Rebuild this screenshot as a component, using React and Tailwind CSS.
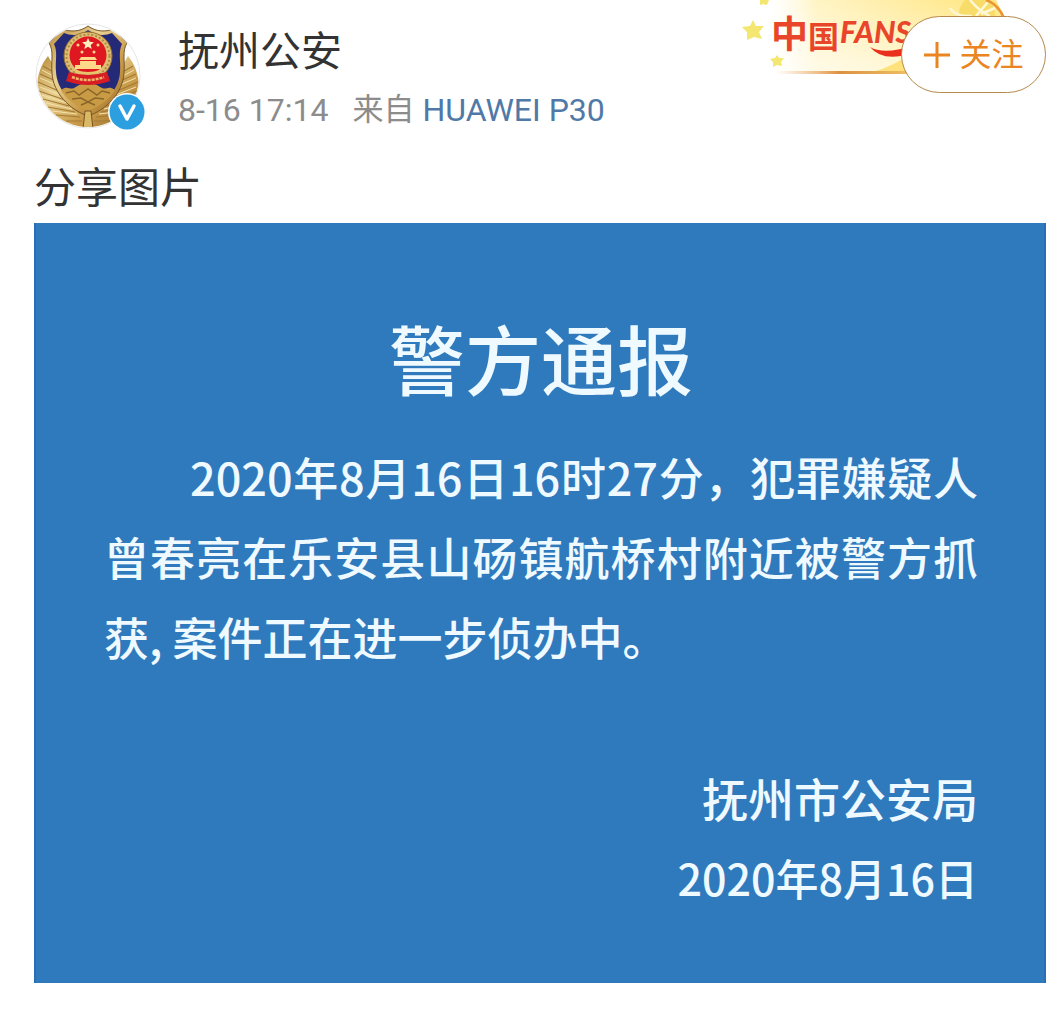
const SANS = "font-['Roboto','Noto_Sans_CJK_SC',sans-serif]";
const CJK = "font-['Noto_Sans_CJK_SC',sans-serif]";

function PoliceBadge() {
  return (
    <svg viewBox="0 0 108 108" className="size-[108px]" role="img" aria-label="抚州公安">
      <defs>
        <linearGradient id="gold" x1="0" y1="0" x2="1" y2="1">
          <stop offset="0" stopColor="#b98c3c" />
          <stop offset=".35" stopColor="#ead292" />
          <stop offset=".65" stopColor="#c99b48" />
          <stop offset="1" stopColor="#9a6a2a" />
        </linearGradient>
        <clipPath id="round">
          <circle cx="54" cy="54" r="51" />
        </clipPath>
      </defs>
      <circle cx="54" cy="54" r="52" fill="#fff" stroke="#e6e6e6" />
      <g clipPath="url(#round)">
        <path d="M14 34C4 46 0 64 6 80c5 12 20 22 42 26h12c22-4 37-14 42-26 6-16 2-34-8-46l-8 14-32 36-32-36z" fill="url(#gold)" />
        <g stroke="#a07b38" strokeWidth="1.2" fill="none">
          <path d="M9 44l14 8M6 52l18 8M4 60l23 10M5 69l26 9M9 77l26 7M14 85l27 5M22 93l24 2M32 99l16 0" />
          <path d="M99 44l-14 8M102 52l-18 8M104 60l-23 10M103 69l-26 9M99 77l-26 7M94 85l-27 5M86 93l-24 2M76 99l-16 0" />
        </g>
        <g stroke="#f3e2ae" strokeWidth="1" fill="none">
          <path d="M8 48l15 8M6 56l19 8M6 65l23 9M8 73l25 8M12 81l26 6M18 89l25 3" />
          <path d="M100 48l-15 8M102 56l-19 8M102 65l-23 9M100 73l-25 8M96 81l-26 6M90 89l-25 3" />
        </g>
        <path d="M54 4C46 10 36 10 29 7L15 21c5 8 2 17 3 30 1 20 18 37 36 43 18-6 35-23 36-43 1-13-2-22 3-30L79 7c-7 3-17 3-25-3z" fill="url(#gold)" stroke="#75562a" strokeWidth="1" />
        <path d="M54 8c-8 6-17 6-24 3L20 22c4 8 1 17 2 28 1 17 14 31 32 38 18-7 31-21 32-38 1-11-2-20 2-28L78 11c-7 3-16 3-24-3z" fill="#252a78" />
        <path d="M27 68c6-5 9 0 13-2 5-3 8-5 14-5s9 2 14 5c4 2 7-3 13 2-5 9-15 16-27 21-12-5-22-12-27-21z" fill="#c99b45" />
        <path d="M32 71l8-2 5 4 9-6 9 6 5-4 8 2M38 77l9-1 7 4 7-4 9 1M47 83l7-3 7 3" stroke="#8a662a" fill="none" strokeWidth="1.5" />
        <circle cx="54" cy="34" r="24" fill="#dfbf73" stroke="#98702e" strokeWidth="1" />
        <circle cx="54" cy="34" r="21.500" fill="none" stroke="#b08a48" strokeWidth="2" strokeDasharray="2 2" />
        <circle cx="54" cy="33" r="18.500" fill="#df1720" />
        <path d="M54 16l1.700 3.800 4.200.4-3.200 2.700 1 4.100-3.700-2.200-3.700 2.200 1-4.100-3.200-2.700 4.200-.4z" fill="#fff0c2" />
        <g fill="#ffd88a">
          <circle cx="44" cy="23" r="1.500" />
          <circle cx="48" cy="30" r="1.500" />
          <circle cx="60" cy="30" r="1.500" />
          <circle cx="64" cy="23" r="1.500" />
          <path d="M47 35h14l2 3H45zM46 39h16v4H46zM41 43h26v4H41z" />
        </g>
        <path d="M35 50q19 6 38 0l3 9q-22 8-44 0z" fill="#d71c23" />
        <path d="M38 55q16 6 32 0" fill="none" stroke="#f0b56c" strokeWidth="2.500" strokeDasharray="3 1" />
        <path d="M42 49q12 4 24 0" fill="none" stroke="#e9c46b" strokeWidth="2" />
        <path d="M51 89h6l2 18H49z" fill="#d9b866" stroke="#795420" />
      </g>
    </svg>
  );
}

function VerifiedMark() {
  return (
    <svg viewBox="0 0 38 38" className="absolute right-0 bottom-0 size-[38px]" role="img" aria-label="认证">
      <circle cx="19" cy="19" r="19" fill="#fff" />
      <circle cx="19" cy="19" r="17.500" fill="#2b9fe0" />
      <path d="M12 13l7 13 7-13" fill="none" stroke="#fff" strokeWidth="3.500" strokeLinejoin="round" strokeLinecap="round" />
    </svg>
  );
}

function FansBanner() {
  return (
    <svg viewBox="0 0 290 80" className="absolute top-0 right-[50px] h-20 w-[290px]" role="img" aria-label="中国FANS">
      <defs>
        <linearGradient id="glow" x1="0" x2="1">
          <stop offset="0" stopColor="#fffae0" stopOpacity="0" />
          <stop offset=".2" stopColor="#fff4c4" />
          <stop offset="1" stopColor="#ffe57c" />
        </linearGradient>
        <linearGradient id="fade" x1="0" x2="0" y1="0" y2="1">
          <stop offset="0" stopColor="#fff" stopOpacity="0" />
          <stop offset="1" stopColor="#fff" stopOpacity=".6" />
        </linearGradient>
        <linearGradient id="rule" x1="0" x2="1">
          <stop offset="0" stopColor="#f4b77c" stopOpacity="0" />
          <stop offset=".4" stopColor="#dc9140" />
          <stop offset="1" stopColor="#f5cf73" />
        </linearGradient>
      </defs>
      <path d="M50 0H276l8 16v57H56z" fill="url(#glow)" />
      <path d="M50 0H276l8 16v57H56z" fill="url(#fade)" />
      <path d="M152 72q18-4 40-19v19z" fill="#ffe27c" />
      <circle cx="257" cy="14" r="18" fill="#f8dc6a" />
      <path d="M230 8q5 9 22 8M250 0q10 12 20 16M268 2l-12 14M275 8l-14 6" fill="none" stroke="#fff8d8" strokeWidth="2.500" />
      <path d="M266 0q12 4 18 18" fill="none" stroke="#e99635" strokeWidth="2.500" />
      <rect x="55" y="71" width="160" height="3" fill="url(#rule)" />
      <g fill="#f3e671">
        <path d="M33 20l3 6 8 0-5 6 3 7-8-2-7 3 0-8-5-5 8-1z" />
        <path d="M57 55l2 3 5 0-3 4 1 4-5-1-4 2 0-5-3-3 5-1z" />
        <path d="M40 0h9l-2 5-4-1-3 1z" />
      </g>
      <g fill="#e9452b" className="font-['Noto_Sans_CJK_SC',sans-serif] font-bold">
        <text x="51" y="48" fontSize="37">中</text>
        <text x="88" y="48" fontSize="31">国</text>
      </g>
      <text x="120" y="43" fontSize="30" fill="#e9452b" className="font-['Lato',sans-serif] font-black italic">
        FANS
      </text>
      <path d="M150 47q14 8 42-1l-2 8q-28 8-40-7z" fill="#e9301d" />
    </svg>
  );
}

export default function App() {
  return (
    <main className={`relative bg-white pt-[22px] pr-[14px] pb-7 pl-[34px] text-[#333] ${SANS}`}>
      <FansBanner />
      <header className="relative flex items-start justify-between">
        <div className="flex">
          <div className="relative h-[109px] w-[112px] shrink-0">
            <PoliceBadge />
            <VerifiedMark />
          </div>
          <div className="ml-8">
            <h1 className="text-[41px] leading-[60px]">抚州公安</h1>
            <p className="flex items-center text-[32px] leading-[56px] whitespace-nowrap text-[#8c8c8c]">
              <time>8-16 17:14</time>
              <span className="ml-6 text-[31px]">来自</span>
              <a href="#device" className="ml-2 text-[#5079a8]">HUAWEI P30</a>
            </p>
          </div>
        </div>
        <button
          type="button"
          className="-mt-1.5 flex h-[77px] w-[145px] shrink-0 items-center justify-center gap-2 rounded-full border border-[#b58a4c] bg-white text-[32px] text-[#ea8521]"
        >
          <svg viewBox="0 0 28 28" className="size-7" aria-hidden="true">
            <path d="M14 1v26M1 14h26" stroke="currentColor" strokeWidth="3" />
          </svg>
          <span>关注</span>
        </button>
      </header>
      <p className="mt-[17px] text-[42px] leading-[68px]">分享图片</p>
      <article className={`border-x-2 border-[#2c6db8] bg-[#2f79bd] pt-[92px] pr-[66px] pb-[66px] pl-[68px] text-[45px] leading-[80px] font-medium text-[#eefaff] ${CJK}`}>
        <h2 className="text-center text-[76px] leading-[84px]">警方通报</h2>
        <p className="mt-[38px] indent-[86px] text-justify">
          2020年8月16日16时27分，犯罪嫌疑人曾春亮在乐安县山砀镇航桥村附近被警方抓获, 案件正在进一步侦办中。
        </p>
        <footer className="mt-20 text-right">
          <p className="text-[46px]">抚州市公安局</p>
          <p>
            <time dateTime="2020-08-16" className="text-[43px]">2020年8月16日</time>
          </p>
        </footer>
      </article>
    </main>
  );
}
